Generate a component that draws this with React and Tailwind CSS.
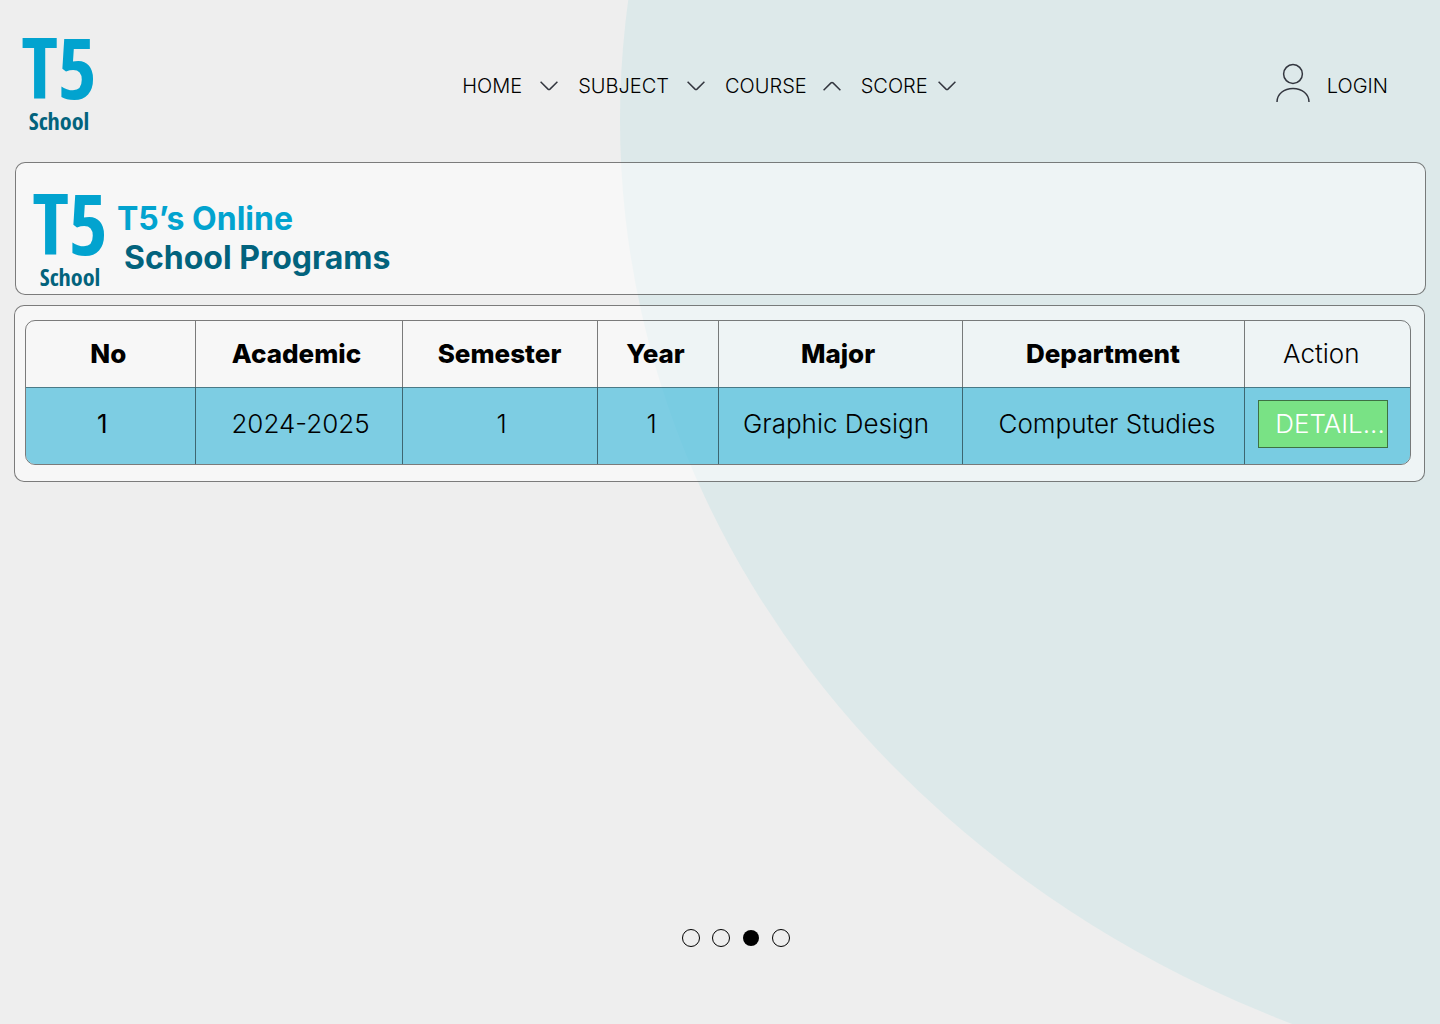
import React from "react";

const NAV = [
  { label: "HOME", gap: "gap-[18px]" },
  { label: "SUBJECT", gap: "gap-[18px]" },
  { label: "COURSE", gap: "gap-4", open: true },
  { label: "SCORE", gap: "gap-2.5" },
];

const COLUMNS = [
  { title: "No", width: "w-[169px]", value: "1", head: "pr-1 font-extrabold", cell: "pr-4 font-normal" },
  { title: "Academic", width: "w-[207px]", value: "2024-2025", head: "pr-1 font-extrabold", cell: "pl-1 font-light" },
  { title: "Semester", width: "w-[195px]", value: "1", head: "font-extrabold", cell: "pl-1 font-light" },
  { title: "Year", width: "w-[121px]", value: "1", head: "pr-1 font-extrabold", cell: "pr-3 font-light" },
  { title: "Major", width: "w-[244px]", value: "Graphic Design", head: "pr-1 font-extrabold", cell: "pr-2 font-light" },
  { title: "Department", width: "w-[282px]", value: "Computer Studies", head: "font-extrabold", cell: "pl-2 font-light" },
];

function Chevron({ up }) {
  return (
    <svg viewBox="0 0 18 10" className="h-[10px] w-[18px]" fill="none" stroke="#33363f" strokeWidth="1.5" aria-hidden="true">
      {up ? (
        <path d="M.6 9.2 8 1.9Q9 1 10 1.9L17.4 9.2" />
      ) : (
        <path d="M.6.8 8 8.1Q9 9 10 8.1L17.4.8" />
      )}
    </svg>
  );
}

function Logo() {
  return (
    <div className="flex w-[66px] flex-col items-center font-['Open_Sans_Condensed','Roboto_Condensed',sans-serif] font-bold">
      <span className="text-[84px] leading-[80px] text-[#02a3cf]">T5</span>
      <span className="text-2xl leading-7 text-[#02637d]">School</span>
    </div>
  );
}

function Header() {
  return (
    <header className="grid h-[162px] grid-cols-[1fr_auto_1fr] items-center pr-[52px] pl-[26px]">
      <a href="#home" aria-label="T5 School" className="justify-self-start">
        <Logo />
      </a>
      <nav className="flex items-center gap-5 pt-2.5 pl-1">
        {NAV.map((item) => (
          <button key={item.label} type="button" aria-expanded={!!item.open} className={"flex items-center " + item.gap}>
            <span>{item.label}</span>
            <Chevron up={item.open} />
          </button>
        ))}
      </nav>
      <a href="#login" className="flex items-center gap-[17px] justify-self-end pt-2.5">
        <svg viewBox="0 0 34 40" className="mb-1.5 h-10 w-[34px]" fill="none" stroke="#33363f" strokeWidth="1.5" aria-hidden="true">
          <circle cx="17" cy="11" r="9.4" />
          <path d="M1 39C1 31 8 25.500 17 25.500S33 31 33 39" />
        </svg>
        <span>LOGIN</span>
      </a>
    </header>
  );
}

function Programs() {
  return (
    <section className="mt-2.5 mr-[15px] ml-3.5 rounded-[10px] border border-black/50 bg-white/50 pt-3.5 pr-[13px] pb-4 pl-2.5">
      <div className="overflow-hidden rounded-[10px] border border-black/50">
        <table className="w-full table-fixed border-collapse text-center text-[26px] leading-8">
          <thead>
            <tr className="h-[66px]">
              {COLUMNS.map((c) => (
                <th key={c.title} scope="col" className={"border-r border-black/50 " + c.width + " " + c.head}>
                  {c.title}
                </th>
              ))}
              <th scope="col" className="pr-3 font-light">Action</th>
            </tr>
          </thead>
          <tbody>
            <tr className="h-[77px] border-t border-black/40 bg-[#04a4cf]/50">
              {COLUMNS.map((c) => (
                <td key={c.title} className={"border-r border-black/50 pb-1 " + c.cell}>
                  {c.value}
                </td>
              ))}
              <td className="pr-2 pb-1">
                <button type="button" className="mx-auto block h-12 w-[130px] border border-[#3d7143] bg-[#79e285] pl-4 text-left font-light whitespace-nowrap text-white">
                  DETAIL...
                </button>
              </td>
            </tr>
          </tbody>
        </table>
      </div>
    </section>
  );
}

function Pager() {
  return (
    <nav aria-label="Pages" className="mt-auto flex items-center justify-center gap-3 pb-[77px] pl-8">
      {[1, 2, 3, 4].map((n) =>
        n === 3 ? (
          <button key={n} type="button" aria-label={"Page " + n} aria-current="page" className="mx-px size-4 rounded-full bg-black" />
        ) : (
          <button key={n} type="button" aria-label={"Page " + n} className="size-[18px] rounded-full border border-black" />
        )
      )}
    </nav>
  );
}

export default function App() {
  return (
    <div className="relative isolate flex min-h-screen flex-col overflow-hidden bg-[#eeeeee] font-['Inter',sans-serif] text-xl font-light text-black">
      <div className="absolute -top-[864px] left-[620px] -z-10 h-[1968px] w-[2222px] rounded-[50%] bg-[#dde9ea]" />
      <Header />
      <section className="mr-3.5 ml-[15px] flex h-[133px] items-center gap-3.5 rounded-[10px] border border-black/50 bg-white/50 pt-4 pl-[21px]">
        <Logo />
        <h1 className="pt-0.5 text-[32px] leading-[39px] font-bold text-[#02637d]">
          <span className="block text-[#02a3cf]">T5’s Online</span>
          <span className="block pl-[7px]">School Programs</span>
        </h1>
      </section>
      <Programs />
      <Pager />
    </div>
  );
}
